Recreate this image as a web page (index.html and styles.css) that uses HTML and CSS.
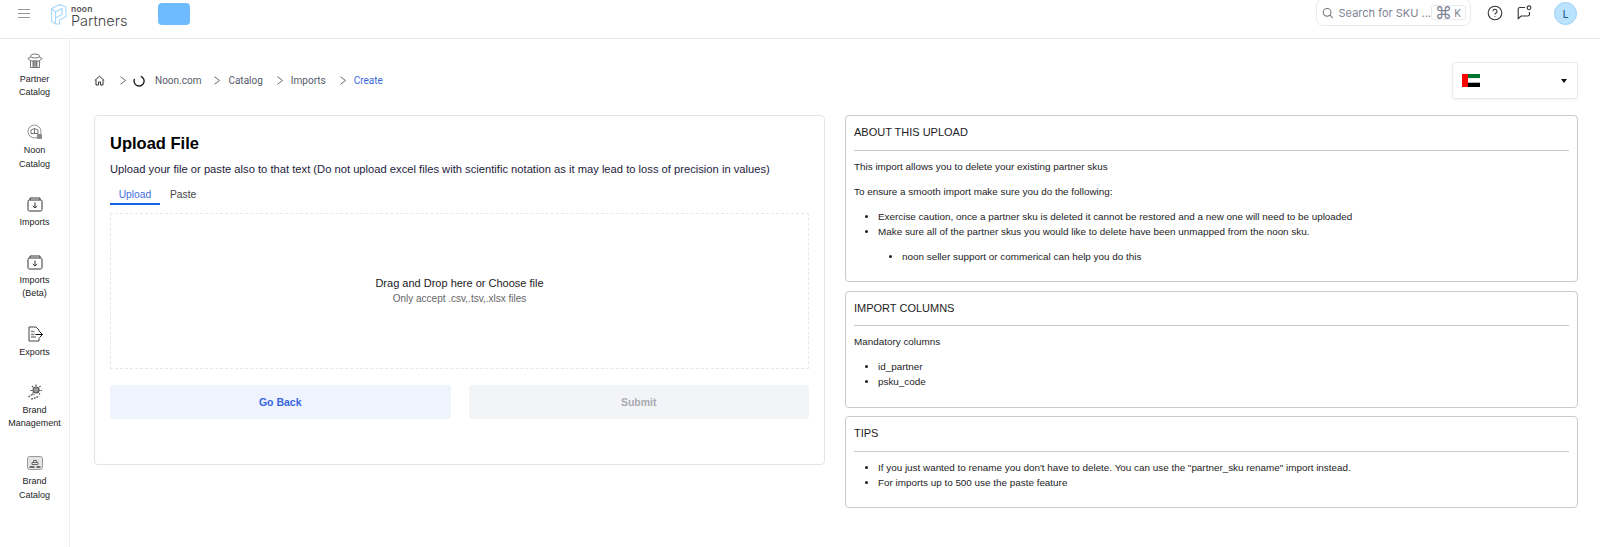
FILE: index.html
```html
<!DOCTYPE html>
<html lang="en">
<head>
<meta charset="utf-8">
<title>noon Partners - Upload File</title>
<link rel="stylesheet" href="styles.css">
</head>
<body>
<header class="topbar">
  <div class="top-left">
    <svg class="burger" width="12" height="10" viewBox="0 0 12 10"><path d="M0 .5h12M0 4.500h12M0 8.500h12" stroke="#9a9a9a" fill="none"/></svg>
    <svg class="logo-mark" width="17" height="22" viewBox="0 0 17 22" fill="none" stroke="#a5d8fc" stroke-width="1.100"><path d="M1.500 5.500 10 1.500 16 4v9.500L9.500 17v4h-4l-4-3z"/><path d="M5.500 9 12 5.500v6l-6.500 3.500M5.500 9v12M1.500 5.500l4 3.500M10 1.500V3"/></svg>
    <div class="logo-text"><span class="logo-noon">noon</span><span class="logo-partners">Partners</span></div>
    <div class="blue-chip"></div>
  </div>
  <div class="top-right">
    <div class="search">
      <svg width="12" height="12" viewBox="0 0 12 12" fill="none" stroke="#777" stroke-width="1.100"><circle cx="5.300" cy="5.300" r="4"/><path d="m8.300 8.300 2.800 2.800"/></svg>
      <span class="search-text">Search for SKU ...</span>
      <span class="kbd"><span class="kbd-cmd">⌘</span><span>K</span></span>
    </div>
    <svg class="help" width="16" height="16" viewBox="0 0 16 16" fill="none" stroke="#333" stroke-width="1.100"><circle cx="8" cy="8" r="6.800"/><path d="M6 6.300a2 2 0 1 1 3 1.700c-.7.400-1 .8-1 1.500"/><path d="M8 11.200v.8"/></svg>
    <svg class="chat" width="15" height="15" viewBox="0 0 15 15" fill="none" stroke="#333" stroke-width="1.100"><path d="M8 2.500H3A1.800 1.800 0 0 0 1.200 4.300V13.500L4.200 11h6.500a1.800 1.800 0 0 0 1.800-1.800V7"/><circle cx="12" cy="2.800" r="1.900"/></svg>
    <div class="avatar">L</div>
  </div>
</header>
<div class="shell">
  <nav class="sidebar">
    <a class="nav-item"><svg width="16" height="16" viewBox="0 0 16 16" fill="none" stroke="#666" stroke-width=".9"><ellipse cx="8" cy="3" rx="4.500" ry="2"/><path d="M.8 5.500 4 3.800M15.200 5.500 12 3.800M.8 5.500 4 8h8l3.200-2.500M3.500 8v6.500h9V8"/><path d="M6 8h4v6.500H6z" fill="#bbb"/><path d="M6 10h4M6 12h4"/></svg><span>Partner<br>Catalog</span></a>
    <a class="nav-item"><svg width="16" height="16" viewBox="0 0 16 16" fill="none" stroke="#888" stroke-width=".9"><circle cx="7.500" cy="7.500" r="6.500"/><path d="M4 6 7.500 4.500 11 6v3.500H4zM7.500 4.500v5" stroke="#666"/><rect x="10.500" y="10.500" width="4" height="4" fill="#888"/></svg><span>Noon<br>Catalog</span></a>
    <a class="nav-item"><svg width="16" height="16" viewBox="0 0 16 16" fill="none" stroke="#333" stroke-width="1"><rect x="1" y="4" width="14" height="11" rx="1.500"/><path d="M3 4V2h10v2M8 6.500V12M5.800 10 8 12l2.200-2"/></svg><span>Imports</span></a>
    <a class="nav-item"><svg width="16" height="16" viewBox="0 0 16 16" fill="none" stroke="#333" stroke-width="1"><rect x="1" y="4" width="14" height="11" rx="1.500"/><path d="M3 4V2h10v2M8 6.500V12M5.800 10 8 12l2.200-2"/></svg><span>Imports<br>(Beta)</span></a>
    <a class="nav-item"><svg width="16" height="16" viewBox="0 0 16 16" fill="none" stroke="#444" stroke-width="1"><path d="M12 5.500V4L9 1H2v14h10v-3"/><path d="M4 5.500h3.500M4 8.500h3.500M4 11h5" stroke="#888" stroke-width="1.300"/><path d="M8.500 8.500h7" stroke="#111"/><path d="m12.500 5.500 3 3-3 3" stroke="#111"/></svg><span>Exports</span></a>
    <a class="nav-item"><svg width="16" height="16" viewBox="0 0 16 16" fill="none" stroke="#555" stroke-width="1.200"><circle cx="9" cy="6" r="3" fill="#999"/><path d="M9 .5v2.500M13.500 2l-2 2M15 6.500h-3M13 10.500l-2-2M5 2l1.800 2M3.500 6.500H6M5.500 9.500l1.500-1.500" stroke-dasharray="1.500 .7"/><path d="M1.500 13c2-2 4-2.500 6-2.500M4 15c3-.5 5-1 8-3" stroke-dasharray="2 .8"/></svg><span>Brand<br>Management</span></a>
    <a class="nav-item"><svg width="16" height="14" viewBox="0 0 16 14" fill="none" stroke="#999" stroke-width="1"><rect x=".5" y=".5" width="15" height="13" rx="2" fill="#e4e4e4"/><path d="M5 6.500h6v2H5zM6.500 6.500v-2h3v2" stroke="#666"/><path d="M2.500 11h5M9.500 11h4" stroke="#444" stroke-width="1.300"/></svg><span>Brand<br>Catalog</span></a>
  </nav>
  <main class="main">
    <div class="crumb-row">
      <ol class="crumbs">
        <li class="crumb-home"><svg width="11" height="11" viewBox="0 0 11 11" fill="none" stroke="#333" stroke-width="1"><path d="M.8 5.500 5.500 1.200l4.700 4.300M2 4.800V10h2.500V7h2v3H9V4.800"/></svg></li>
        <li class="sep"><svg width="6" height="9" viewBox="0 0 6 9" fill="none" stroke="#666"><path d="m.5.700 5 3.800-5 3.800"/></svg></li>
        <li class="spin"><svg width="12" height="12" viewBox="0 0 12 12" fill="none" stroke="#111" stroke-width="1.300"><path d="M7.800 1.300A5 5 0 1 1 1.500 4"/></svg></li>
        <li class="crumb crumb-noon">Noon.com</li>
        <li class="sep"><svg width="6" height="9" viewBox="0 0 6 9" fill="none" stroke="#666"><path d="m.5.700 5 3.800-5 3.800"/></svg></li>
        <li class="crumb">Catalog</li>
        <li class="sep"><svg width="6" height="9" viewBox="0 0 6 9" fill="none" stroke="#666"><path d="m.5.700 5 3.800-5 3.800"/></svg></li>
        <li class="crumb">Imports</li>
        <li class="sep"><svg width="6" height="9" viewBox="0 0 6 9" fill="none" stroke="#666"><path d="m.5.700 5 3.800-5 3.800"/></svg></li>
        <li class="crumb crumb-active">Create</li>
      </ol>
      <div class="country">
        <svg width="18" height="13" viewBox="0 0 18 13"><rect width="6" height="13" fill="#f00"/><rect x="6" width="12" height="4.300" fill="#00732f"/><rect x="6" y="4.300" width="12" height="4.400" fill="#fff"/><rect x="6" y="8.700" width="12" height="4.300"/></svg>
        <span class="caret"></span>
      </div>
    </div>
    <div class="columns">
      <section class="card">
        <h1 class="card-title">Upload File</h1>
        <p class="card-sub">Upload your file or paste also to that text (Do not upload excel files with scientific notation as it may lead to loss of precision in values)</p>
        <div class="tabs"><span class="tab tab-on">Upload</span><span class="tab">Paste</span></div>
        <div class="drop">
          <div class="drop-main">Drag and Drop here or Choose file</div>
          <div class="drop-note">Only accept .csv,.tsv,.xlsx files</div>
        </div>
        <div class="actions">
          <button class="btn btn-back">Go Back</button>
          <button class="btn btn-submit">Submit</button>
        </div>
      </section>
      <aside class="info">
        <section class="panel">
          <h2 class="panel-title">ABOUT THIS UPLOAD</h2>
          <hr class="rule">
          <p>This import allows you to delete your existing partner skus</p>
          <p>To ensure a smooth import make sure you do the following:</p>
          <ul>
            <li>Exercise caution, once a partner sku is deleted it cannot be restored and a new one will need to be uploaded</li>
            <li>Make sure all of the partner skus you would like to delete have been unmapped from the noon sku.
              <ul><li>noon seller support or commerical can help you do this</li></ul>
            </li>
          </ul>
        </section>
        <section class="panel">
          <h2 class="panel-title">IMPORT COLUMNS</h2>
          <hr class="rule">
          <p>Mandatory columns</p>
          <ul><li>id_partner</li><li>psku_code</li></ul>
        </section>
        <section class="panel">
          <h2 class="panel-title">TIPS</h2>
          <hr class="rule">
          <ul>
            <li>If you just wanted to rename you don't have to delete. You can use the "partner_sku rename" import instead.</li>
            <li>For imports up to 500 use the paste feature</li>
          </ul>
        </section>
      </aside>
    </div>
  </main>
</div>
</body>
</html>
```
FILE: styles.css
```css
* { box-sizing: border-box; }
html, body { margin: 0; height: 100%; overflow: hidden; background: #fff; }
body { font-family: "Liberation Sans", Arial, sans-serif; color: #1c1c24; font-size: 10.5px; }

.topbar { height: 39px; border-bottom: 1px solid #e6e8f0; display: flex; justify-content: space-between; align-items: flex-start; }
.top-left { display: flex; align-items: flex-start; padding: 3px 0 0 18px; }
.burger { margin: 6px 20px 0 0; }
.logo-mark { margin-right: 4px; }
.logo-text { display: flex; flex-direction: column; width: 87px; color: #555; }
.logo-noon { font-family: Inter, sans-serif; font-size: 8.500px; line-height: 8px; font-weight: 600; margin-top: 2px; letter-spacing: .2px; }
.logo-partners { font-family: Inter, sans-serif; font-size: 14.500px; line-height: 15px; font-weight: 300; color: #444; }
.blue-chip { width: 32px; height: 22px; border-radius: 4px; background: #6ebcff; }

.top-right { display: flex; align-items: flex-start; padding-right: 23px; }
.search { width: 155px; height: 27px; margin-right: 16px; margin-top: -1px; border: 1px solid #e8eaf0; border-radius: 7px; display: flex; align-items: center; padding: 0 4px 0 5px; font-family: Inter, sans-serif; color: #7e8494; font-size: 11px; }
.search-text { margin-left: 5px; white-space: nowrap; }
.kbd { margin-left: auto; width: 36px; height: 15px; border: 1px solid #e8eaf0; border-radius: 3px; display: flex; align-items: center; justify-content: space-between; padding: 0 4px 0 3px; font-size: 10px; }
.kbd-cmd { font-family: "DejaVu Sans", sans-serif; font-size: 17px; line-height: 14px; font-weight: 300; }
.help { margin: 5px 6px 0 0; }
.chat { margin: 5px 22px 0 8px; }
.avatar { width: 23px; height: 23px; margin-top: 2px; border-radius: 50%; background: #bbe3fd; border: 1px solid #96d0fa; display: flex; align-items: center; justify-content: center; font-family: Inter, sans-serif; font-size: 10px; font-weight: 500; color: #1d5c96; }

.shell { display: flex; height: 508px; }
.sidebar { width: 70px; flex: none; border-right: 1px solid #eceef3; padding-top: 13px; display: flex; flex-direction: column; gap: 23.900px; }
.nav-item { display: flex; flex-direction: column; align-items: center; gap: 3px; font-size: 9px; line-height: 13.300px; text-align: center; color: #1c1c24; }
.nav-item svg { height: 18px; flex: none; }

.main { flex: 1; padding: 23px 22px 0 24px; min-width: 0; }
.crumb-row { display: flex; justify-content: space-between; align-items: center; height: 37px; margin-bottom: 16px; }
.crumbs { list-style: none; margin: 0; padding: 0; display: flex; align-items: center; font-family: Roboto, sans-serif; font-size: 10px; color: #555a6a; }
.crumbs li { display: flex; align-items: center; }
.sep { margin: 0 8px 0 14px; }
.crumb-home + .sep { margin-left: 15px; }
.crumb-noon + .sep { margin-left: 13px; }
.spin { margin-left: -1px; margin-right: 10px; }
.crumb-active { color: #3866df; }
.country { width: 126px; height: 37px; border: 1px solid #ebebef; border-radius: 3px; box-shadow: 0 1px 3px rgba(0,0,0,.06); display: flex; align-items: center; justify-content: space-between; padding: 0 10px 0 9px; }
.caret { width: 0; height: 0; border-left: 3.500px solid transparent; border-right: 3.500px solid transparent; border-top: 4px solid #111; }

.columns { display: grid; grid-template-columns: 731fr 733fr; gap: 20px; align-items: start; }
.card { height: 350px; border: 1px solid #e4e4e6; border-radius: 4px; padding: 15px 15px 0; }
.card-title { margin: 0; font-size: 16.500px; line-height: 24px; font-weight: 700; color: #000; }
.card-sub { margin: 6px 0 0; font-size: 11.200px; line-height: 16px; color: #1c1c3c; white-space: nowrap; }
.tabs { display: flex; margin-top: 11px; height: 17px; }
.tab { width: 50px; text-align: center; line-height: 14px; font-size: 10.300px; color: #444; }
.tab-on { color: #3f6fe0; border-bottom: 2px solid #1565e8; }
.tab + .tab { width: auto; margin-left: 10px; }
.drop { height: 156px; margin-top: 8px; border: 1px dashed #e8e8ea; display: flex; flex-direction: column; align-items: center; padding-top: 62px; }
.drop-main { font-size: 11px; line-height: 15px; color: #222; }
.drop-note { font-size: 10px; line-height: 15px; color: #666; }
.actions { display: grid; grid-template-columns: 1fr 1fr; gap: 18px; margin-top: 16px; }
.btn { height: 34px; border: 0; border-radius: 3px; font: 700 10.500px "Liberation Sans", sans-serif; }
.btn-back { background: #eef3fd; color: #3866df; }
.btn-submit { background: #f3f4f8; color: #a9abb3; }

.info { display: flex; flex-direction: column; gap: 8.500px; }
.panel { border: 1px solid #c9c9d3; border-radius: 4px; padding: 7px 8px 7.500px; }
.panel-title { margin: 0; font-size: 11px; line-height: 18px; font-weight: 400; color: #1c1c24; }
.rule { border: 0; border-top: 1px solid #c9c9d3; margin: 8.500px 0 8px; }
.panel p { margin: 0 0 10px; line-height: 15px; font-size: 9.900px; }
.panel ul { margin: 0 0 10px; padding-left: 24px; line-height: 15px; font-size: 9.900px; list-style: disc; }
.panel ul ul { margin: 10px 0 0; }
```
